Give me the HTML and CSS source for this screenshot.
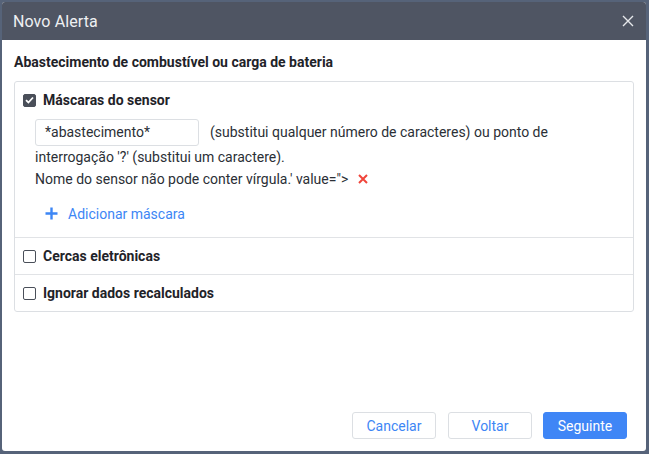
FILE: index.html
```html
<!DOCTYPE html>
<html lang="pt">
<head>
<meta charset="utf-8">
<link rel="stylesheet" href="styles.css">
</head>
<body>
<div class="modal">
  <div class="modal-header">
    <span class="modal-title">Novo Alerta</span>
    <svg class="close" width="12" height="12" viewBox="0 0 12 12"><path d="M1 1L11 11M11 1L1 11" stroke="#e6e8eb" stroke-width="1.4" fill="none"/></svg>
  </div>
  <div class="modal-body">
    <div class="heading">Abastecimento de combustível ou carga de bateria</div>
    <div class="box">
      <div class="row row-open">
        <div class="row-head">
          <span class="cb cb-checked"><svg width="9" height="8" viewBox="0 0 9 8"><path d="M1 4.2L3.4 6.5L8 1.5" stroke="#fff" stroke-width="1.8" fill="none"/></svg></span>
          <span class="label">Máscaras do sensor</span>
        </div>
        <div class="mask-content">
          <div class="mask-line"><span class="input">*abastecimento*</span><span class="hint">(substitui qualquer número de caracteres) ou ponto de</span></div>
          <div class="text-line">interrogação '?' (substitui um caractere).</div>
          <div class="text-line">Nome do sensor não pode conter vírgula.' value="&gt;<svg class="remove" width="10" height="10" viewBox="0 0 10 10"><path d="M1 1L9 9M9 1L1 9" stroke="#f0453b" stroke-width="2" fill="none"/></svg></div>
        </div>
        <div class="add">
          <svg class="plus" width="13" height="13" viewBox="0 0 13 13"><path d="M6.5 0.5V12.5M0.5 6.5H12.5" stroke="#3d86f5" stroke-width="2.4" fill="none"/></svg>
          <span>Adicionar máscara</span>
        </div>
      </div>
      <div class="row">
        <div class="row-head">
          <span class="cb"></span>
          <span class="label">Cercas eletrônicas</span>
        </div>
      </div>
      <div class="row">
        <div class="row-head">
          <span class="cb"></span>
          <span class="label">Ignorar dados recalculados</span>
        </div>
      </div>
    </div>
  </div>
  <div class="modal-footer">
    <button class="btn">Cancelar</button>
    <button class="btn">Voltar</button>
    <button class="btn btn-primary">Seguinte</button>
  </div>
</div>
</body>
</html>
```
FILE: styles.css
```css
html, body {
  margin: 0;
  padding: 0;
  height: 100%;
}
body {
  background: #566379;
  font-family: Roboto, "Liberation Sans", sans-serif;
  color: #2b2f36;
  box-sizing: border-box;
  padding: 2px 3px 3px 2px;
}
.modal {
  height: 449px;
  background: #fff;
  border-radius: 3px;
  overflow: hidden;
  display: flex;
  flex-direction: column;
}
.modal-header {
  height: 38px;
  background: #4f5563;
  display: flex;
  align-items: center;
  justify-content: space-between;
  padding: 0 12px 0 11px;
  flex: none;
}
.modal-title {
  color: #eef0f2;
  font-size: 16px;
  font-weight: 400;
  letter-spacing: 0.1px;
}
.close {
  display: block;
}
.modal-body {
  flex: 1;
  padding: 13px 12px 0 12px;
}
.heading {
  font-size: 14px;
  font-weight: 700;
  line-height: 18px;
  margin-bottom: 10px;
  color: #1f2329;
}
.box {
  border: 1px solid #dcdfe3;
  border-radius: 3px;
}
.row {
  border-top: 1px solid #e1e3e6;
}
.row:first-child {
  border-top: none;
}
.row-head {
  display: flex;
  align-items: center;
  height: 36px;
  padding-left: 8px;
}
.row-open .row-head {
  height: 36px;
  padding-top: 0;
}
.cb {
  width: 11px;
  height: 11px;
  border: 1px solid #4a4f59;
  border-radius: 2px;
  background: #fff;
  display: flex;
  align-items: center;
  justify-content: center;
  margin-right: 7px;
  flex: none;
}
.cb-checked {
  background: #4a4f59;
}
.label {
  font-size: 14px;
  font-weight: 700;
  color: #1f2329;
  line-height: 16px;
}
.mask-content {
  padding-left: 20px;
  padding-right: 40px;
  font-size: 14px;
  line-height: 22px;
  color: #2b2f36;
}
.mask-line {
  display: flex;
  align-items: center;
  height: 28px;
}
.text-line {
  height: 22px;
}
.input {
  box-sizing: border-box;
  width: 164px;
  height: 27px;
  border: 1px solid #dcdfe3;
  border-radius: 3px;
  padding-left: 9px;
  line-height: 25px;
  font-size: 14px;
  color: #2b2f36;
  margin-right: 11px;
  flex: none;
}
.remove {
  vertical-align: middle;
  margin-left: 10px;
  margin-top: -2px;
}
.add {
  display: flex;
  align-items: center;
  padding-left: 30px;
  height: 47px;
  color: #3d86f5;
  font-size: 14px;
}
.plus {
  margin-right: 10px;
}
.modal-footer {
  flex: none;
  display: flex;
  justify-content: flex-end;
  gap: 12px;
  padding: 0 19px 12px 0;
}
.btn {
  width: 84px;
  height: 27px;
  box-sizing: border-box;
  border: 1px solid #dcdfe3;
  border-radius: 3px;
  background: #fff;
  color: #3d86f5;
  font-family: Roboto, "Liberation Sans", sans-serif;
  font-size: 14px;
  padding: 0;
  margin: 0;
}
.btn-primary {
  background: #3f86f6;
  border-color: #3f86f6;
  color: #fff;
  margin-left: -1px;
}
```
